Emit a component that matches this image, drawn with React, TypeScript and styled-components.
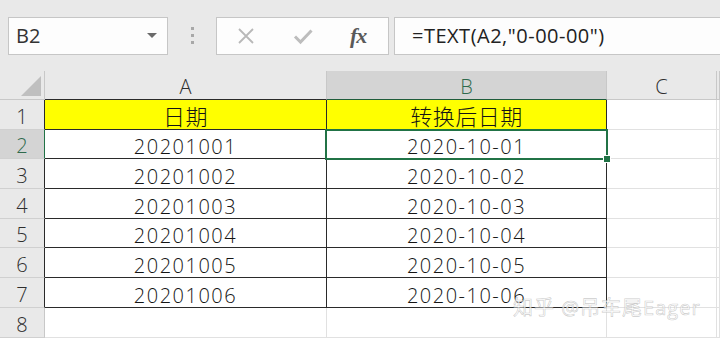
import React from "react";
import styled, { createGlobalStyle } from "styled-components";

const GlobalStyle = createGlobalStyle`
  html, body {
    margin: 0;
    padding: 0;
    overflow: hidden;
    background: #fff;
  }
  body {
    font-family: "Open Sans", "Noto Sans", "Noto Sans CJK SC", sans-serif;
  }
`;

const Page = styled.div`
  position: relative;
  width: 720px;
  height: 341px;
  overflow: hidden;
  background: #fff;
`;

// Formula bar
const Toolbar = styled.div`
  display: flex;
  align-items: center;
  height: 71px;
  padding-left: 8px;
  background: #e9e9e9;
  box-sizing: border-box;
`;

const Box = styled.div`
  height: 38px;
  box-sizing: border-box;
  border: 1px solid #c6c6c6;
  background: #fdfdfd;
  display: flex;
  align-items: center;
`;

const NameBox = styled(Box)`
  width: 160px;
  padding: 0 10px 0 7px;
  justify-content: space-between;
  font-size: 20px;
  color: #333;
`;

const Caret = styled.span`
  width: 0;
  height: 0;
  border-left: 5px solid transparent;
  border-right: 5px solid transparent;
  border-top: 5px solid #6a6a6a;
`;

const Grip = styled.div`
  width: 48px;
  display: flex;
  flex-direction: column;
  align-items: center;
  gap: 4px;
`;

const Dot = styled.span`
  width: 3px;
  height: 3px;
  background: #a8a8a8;
`;

const ToolBox = styled(Box)`
  width: 173px;
  padding-left: 19px;
  gap: 37px;
`;

const Fx = styled.span`
  font-family: "Liberation Serif", "DejaVu Serif", serif;
  font-style: italic;
  font-weight: bold;
  font-size: 22px;
  color: #5a5a5a;
  letter-spacing: -1px;
`;

const FormulaInput = styled(Box)`
  flex: 1;
  margin-left: 5px;
  margin-right: -10px;
  padding-left: 17px;
  font-size: 20px;
  letter-spacing: 0.5px;
  color: #222;
`;

// Sheet
const Sheet = styled.div`
  display: grid;
  grid-template-columns: 45px 282px 280px 110px 1fr;
  grid-template-rows: 29px repeat(8, 29.7px);
`;

const Cell = styled.div<{ $fill?: boolean; $boxR?: boolean; $boxB?: boolean; $cjk?: boolean }>`
  box-sizing: border-box;
  display: flex;
  align-items: flex-end;
  justify-content: center;
  padding-bottom: ${(p) => (p.$cjk ? "2px" : "1px")};
  font-size: ${(p) => (p.$cjk ? "22px" : "20px")};
  font-weight: 300;
  letter-spacing: ${(p) => (p.$cjk ? "0.5px" : "1.5px")};
  line-height: 1;
  color: #151515;
  background: ${(p) => (p.$fill ? "#ffff00" : "#fff")};
  border-right: 1px solid ${(p) => (p.$boxR ? "#2a2a2a" : "#e1e1e1")};
  border-bottom: 1px solid ${(p) => (p.$boxB ? "#2a2a2a" : "#e1e1e1")};
`;

const ActiveCell = styled(Cell)`
  position: relative;
  &::after {
    content: "";
    position: absolute;
    left: -2px;
    top: -1px;
    right: -2px;
    bottom: -2px;
    border: 2px solid #217346;
    pointer-events: none;
  }
  &::before {
    content: "";
    position: absolute;
    right: -5px;
    bottom: -5px;
    width: 6px;
    height: 6px;
    background: #217346;
    border: 1px solid #fff;
    z-index: 2;
  }
`;

const Header = styled.div<{ $selected?: boolean; $edge?: string }>`
  box-sizing: border-box;
  display: flex;
  align-items: flex-end;
  justify-content: center;
  padding-bottom: 2px;
  font-size: 20px;
  font-weight: 300;
  line-height: 1;
  color: ${(p) => (p.$selected ? "#2f6a4d" : "#2e2e2e")};
  background: ${(p) => (p.$selected ? "#d4d4d4" : "#e9e9e9")};
  border-right: 1px solid #c8c8c8;
  border-bottom: 1px solid ${(p) => p.$edge || "#c8c8c8"};
`;

const RowHeader = styled(Header)<{ $sideEdge?: string }>`
  border-right: 1px solid ${(p) => p.$sideEdge || "#c8c8c8"};
  border-bottom: 1px solid #d0d0d0;
`;

const Corner = styled(Header)`
  justify-content: flex-end;
  padding: 0 3px 3px 0;
`;

const Watermark = styled.div`
  position: absolute;
  left: 513px;
  top: 298px;
  font-size: 20px;
  letter-spacing: 1px;
  line-height: 1;
  color: rgba(255, 255, 255, 0.75);
  -webkit-text-stroke: 0.6px rgba(160, 160, 160, 0.55);
  pointer-events: none;
`;

const rows = [
  { a: "日期", b: "转换后日期" },
  { a: "20201001", b: "2020-10-01" },
  { a: "20201002", b: "2020-10-02" },
  { a: "20201003", b: "2020-10-03" },
  { a: "20201004", b: "2020-10-04" },
  { a: "20201005", b: "2020-10-05" },
  { a: "20201006", b: "2020-10-06" },
];

export default function App() {
  return (
    <Page>
      <GlobalStyle />
      <Toolbar>
        <NameBox>
          <span>B2</span>
          <Caret />
        </NameBox>
        <Grip>
          <Dot />
          <Dot />
          <Dot />
        </Grip>
        <ToolBox>
          <svg width="20" height="20" viewBox="0 0 20 20">
            <path d="M3 3 L17 17 M17 3 L3 17" stroke="#b8b8b8" strokeWidth="1.8" fill="none" />
          </svg>
          <svg width="20" height="20" viewBox="0 0 20 20">
            <path d="M2 10.5 L7.5 16 L18.5 4.5" stroke="#bdbdbd" strokeWidth="3" fill="none" />
          </svg>
          <Fx>fx</Fx>
        </ToolBox>
        <FormulaInput>=TEXT(A2,"0-00-00")</FormulaInput>
      </Toolbar>

      <Sheet>
        <Corner>
          <svg width="20" height="20" viewBox="0 0 20 20">
            <polygon points="20,0 20,20 0,20" fill="#bfbfbf" />
          </svg>
        </Corner>
        <Header $edge="#2a2a2a">A</Header>
        <Header $selected $edge="#1f5c3a">B</Header>
        <Header>C</Header>
        <Header />

        {rows.map((r, i) => {
          const n = i + 1;
          const isActive = n === 2;
          return (
            <React.Fragment key={n}>
              <RowHeader $selected={isActive} $sideEdge={isActive ? "#217346" : "#2a2a2a"}>
                {n}
              </RowHeader>
              <Cell $fill={n === 1} $cjk={n === 1} $boxR $boxB>
                {r.a}
              </Cell>
              {isActive ? (
                <ActiveCell $boxR $boxB>
                  {r.b}
                </ActiveCell>
              ) : (
                <Cell $fill={n === 1} $cjk={n === 1} $boxR $boxB>
                  {r.b}
                </Cell>
              )}
              <Cell />
              <Cell />
            </React.Fragment>
          );
        })}
        <RowHeader>8</RowHeader>
        <Cell />
        <Cell />
        <Cell />
        <Cell />
      </Sheet>

      <Watermark>知乎 @吊车尾Eager</Watermark>
    </Page>
  );
}
